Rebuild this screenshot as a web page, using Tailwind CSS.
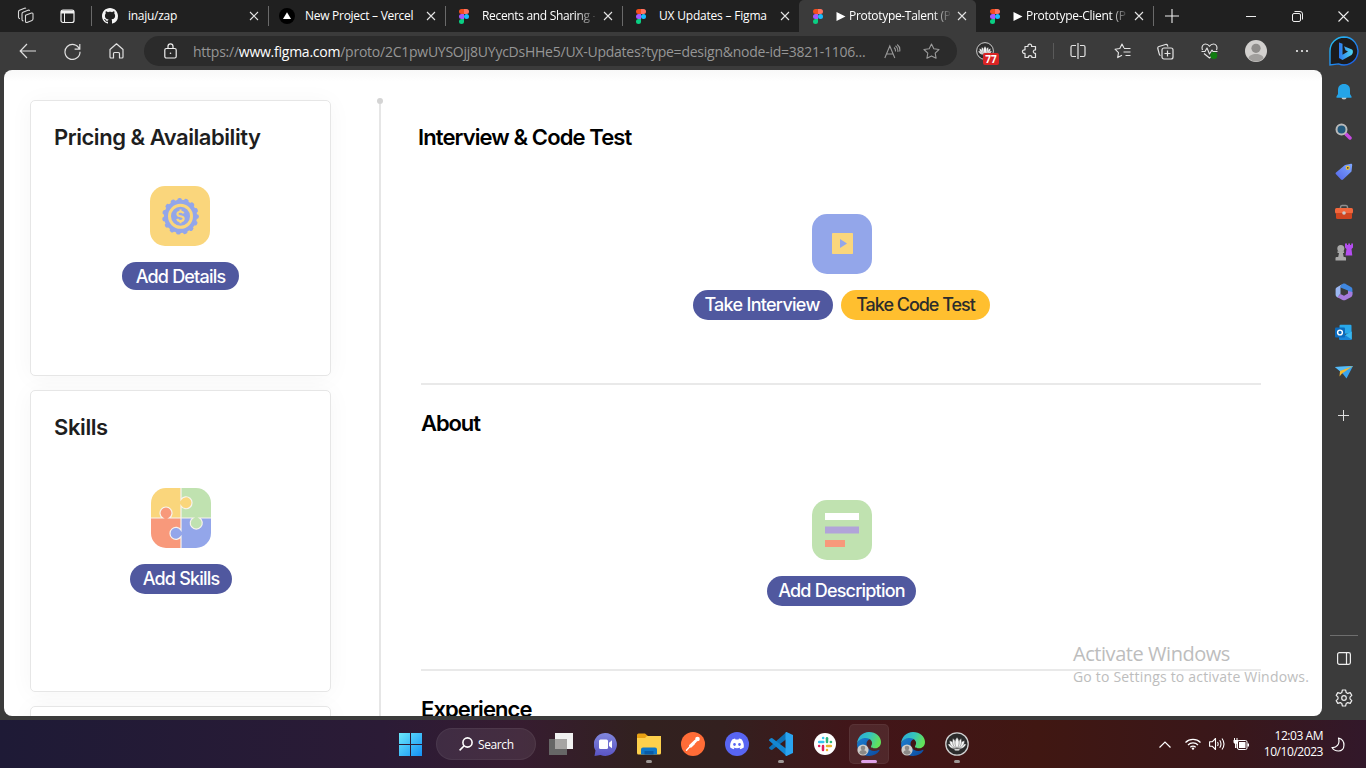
<!DOCTYPE html>
<html lang="en">
<head>
<meta charset="utf-8">
<title>Prototype-Talent</title>
<script src="https://cdn.jsdelivr.net/npm/@tailwindcss/browser@4"></script>
</head>
<body class="w-[1366px] h-[768px] overflow-hidden bg-[#3b3b3b] flex flex-col font-['Open_Sans','Noto_Sans',sans-serif] text-white">

<!-- Shared symbols -->
<svg class="absolute w-0 h-0">
  <symbol id="figma" viewBox="0 0 10 15">
    <path d="M2.5 0H5v5H2.5a2.5 2.5 0 0 1 0-5z" fill="#f24e1e"/><path d="M5 0h2.500a2.500 2.500 0 0 1 0 5H5z" fill="#ff7262"/>
    <path d="M2.500 5H5v5H2.500a2.500 2.500 0 0 1 0-5z" fill="#a259ff"/><circle cx="7.500" cy="7.500" r="2.500" fill="#1abcfe"/>
    <path d="M2.500 10H5v2.500A2.500 2.500 0 1 1 2.500 10z" fill="#0acf83"/>
  </symbol>
  <symbol id="close" viewBox="0 0 10 10"><path d="M1 1l8 8M9 1L1 9" stroke="#e4e4e4" stroke-width="1.100" fill="none"/></symbol>
  <linearGradient id="eg1" x1="0" y1="0" x2="1" y2="0.300"><stop offset="0" stop-color="#2aa6de"/><stop offset=".55" stop-color="#35c4bd"/><stop offset="1" stop-color="#62e05a"/></linearGradient>
  <linearGradient id="eg2" x1="0" y1="0" x2="1" y2="1"><stop offset="0" stop-color="#1b7fd0"/><stop offset="1" stop-color="#0c4aa0"/></linearGradient>
  <linearGradient id="bg1" x1="0" y1="0" x2="1" y2="1"><stop offset="0" stop-color="#27c6f5"/><stop offset="1" stop-color="#1a56e8"/></linearGradient>
  <linearGradient id="bg2" x1="0" y1="0" x2="1" y2="0"><stop offset="0" stop-color="#2b78f0"/><stop offset="1" stop-color="#4fd8f2"/></linearGradient>
  <symbol id="edge" viewBox="0 0 24 24">
    <path d="M0 12c2-6 9-8 13.500-5-4 1-5 5-3 8.500 2 3.500 7 4.500 11 2.500.8-.4 1.200.1.800.8C20.300 22 16.500 24 12 24 5 24 0 19 0 12z" fill="url(#eg2)"/>
    <path d="M0 11.500C.5 5 5.500 0 12 0c7 0 12 4.800 12 10 0 4-2.800 6.300-6 6.300-3.200 0-4.800-1-3.600-2.800C16.500 10.500 14 6 8.500 6 4.500 6 1.200 8.500 0 11.500z" fill="url(#eg1)"/>
    <circle cx="6" cy="18" r="5.600" fill="#cfcdca"/><circle cx="6" cy="16" r="2.300" fill="#8b8987"/><path d="M2.300 21c0-4 7.400-4 7.400 0a5.600 5.600 0 0 1-7.400 0z" fill="#8b8987"/>
  </symbol>
  <symbol id="lotus" viewBox="0 0 24 24">
    <circle cx="12" cy="12" r="11.200" fill="#2b2b2b" stroke="#d0d0d0" stroke-width="1.300"/>
    <g transform="translate(1 1) scale(.92)" fill="#f5f5f5" stroke="#444" stroke-width=".5"><path d="M2 12c4-.5 7.500 1 9.500 5-4 1-8-.8-9.500-5zM22 12c-4-.5-7.500 1-9.500 5 4 1 8-.8 9.500-5z"/><path d="M3.800 8.500c4 .5 7 4 7.700 8.500-4.500-.5-7.500-4-7.700-8.500zM20.200 8.500c-4 .5-7 4-7.700 8.500 4.500-.5 7.500-4 7.700-8.500z"/><path d="M7.500 6c3 2 4.500 7 4 11-4-2-5-7-4-11zM16.500 6c-3 2-4.500 7-4 11 4-2 5-7 4-11z"/><path d="M12 5c3 3 3 8 0 12-3-4-3-9 0-12z"/><path d="M8.500 17.300h7l-1.500 2h-4z"/></g>
  </symbol>
</svg>

<!-- Tab strip -->
<header class="h-8 shrink-0 bg-[#202020] flex items-center text-[12px] tracking-[-0.28px]">
  <div class="w-[91px] flex items-center pl-[17px] gap-[25px] shrink-0">
    <svg class="w-[18px] h-[18px]" viewBox="0 0 18 18" fill="none" stroke="#d8d8d8" stroke-width="1.100" stroke-linejoin="round"><path d="M8.500 8.200l6-2.200q1.500-.3 1.500 1.200v4.600q0 1.200-1 1.600l-5 2q-1.500.4-1.500-1.200z"/><path d="M6.500 14q-1.500-.2-1.500-1.500V6.800q0-1.200 1-1.600l5-2q1.300-.3 1.600.6"/><path d="M3 11.800q-1.500-.3-1.500-1.500V4.800q0-1.200 1-1.600l5-2q1-.3 1.400.3"/></svg>
    <svg class="w-[15px] h-[15px]" viewBox="0 0 15 15" fill="none" stroke="#f0f0f0"><rect x="1" y="1" width="13" height="12.500" rx="2" stroke-width="1.200"/><path d="M1 3h13" stroke-width="3"/><path d="M4.500 4v9.500" stroke-width="1"/></svg>
  </div>
  <div class="w-[177px] shrink-0 flex items-center">
    <i class="w-px h-5 bg-[#6a6a6a]"></i>
    <svg class="ml-[10px] size-4" viewBox="0 0 16 16" fill="#f6f6f6"><path d="M8 0C3.580 0 0 3.580 0 8c0 3.540 2.290 6.530 5.470 7.590.4.070.55-.17.55-.38 0-.19-.01-.82-.01-1.490-2.010.37-2.530-.49-2.690-.94-.09-.23-.48-.94-.82-1.130-.28-.15-.68-.52-.01-.53.63-.01 1.080.58 1.230.82.72 1.210 1.870.87 2.330.66.07-.52.28-.87.51-1.070-1.780-.2-3.640-.89-3.640-3.950 0-.87.31-1.590.82-2.150-.08-.2-.36-1.020.08-2.120 0 0 .67-.21 2.200.82.64-.18 1.320-.27 2-.27s1.360.09 2 .27c1.530-1.040 2.200-.82 2.200-.82.44 1.100.16 1.920.08 2.120.51.56.82 1.270.82 2.150 0 3.070-1.870 3.750-3.650 3.950.29.25.54.73.54 1.480 0 1.070-.01 1.930-.01 2.200 0 .21.15.46.55.38A8 8 0 0 0 16 8c0-4.420-3.580-8-8-8z"/></svg>
    <span class="ml-[10px] w-[110px] whitespace-nowrap overflow-hidden">inaju/zap</span>
    <svg class="ml-[11px] size-[10px]"><use href="#close"/></svg>
  </div>
  <div class="w-[177px] shrink-0 flex items-center">
    <i class="w-px h-5 bg-[#6a6a6a]"></i>
    <svg class="ml-[10px] size-4" viewBox="0 0 16 16"><circle cx="8" cy="8" r="8" fill="#000"/><path d="M8 4.300l4 6.700H4z" fill="#fff"/></svg>
    <span class="ml-[10px] w-[110px] whitespace-nowrap overflow-hidden">New Project – Vercel</span>
    <svg class="ml-[11px] size-[10px]"><use href="#close"/></svg>
  </div>
  <div class="w-[177px] shrink-0 flex items-center">
    <i class="w-px h-5 bg-[#6a6a6a]"></i>
    <svg class="ml-[13px] w-[10px] h-[15px]"><use href="#figma"/></svg>
    <span class="ml-[13px] w-[113px] whitespace-nowrap tracking-[-0.33px] [mask-image:linear-gradient(to_right,#000_94px,transparent_116px)]">Recents and Sharing –</span>
    <svg class="ml-[8px] size-[10px]"><use href="#close"/></svg>
  </div>
  <div class="w-[177px] shrink-0 flex items-center">
    <i class="w-px h-5 bg-[#6a6a6a]"></i>
    <svg class="ml-[13px] w-[10px] h-[15px]"><use href="#figma"/></svg>
    <span class="ml-[13px] w-[110px] whitespace-nowrap tracking-[-0.2px]">UX Updates – Figma</span>
    <svg class="ml-[11px] size-[10px]"><use href="#close"/></svg>
  </div>
  <div class="w-[177px] h-8 shrink-0 flex items-center bg-[#3b3b3b] rounded-t-[5px]">
    <svg class="ml-[14px] w-[10px] h-[15px]"><use href="#figma"/></svg>
    <svg class="ml-[13px] w-[10px] h-[9px]" viewBox="0 0 10 9"><path d="M0.500 0v9L9.500 4.500z" fill="#fff"/></svg>
    <span class="ml-[3px] w-[101px] whitespace-nowrap tracking-[-0.32px] [mask-image:linear-gradient(to_right,#000_84px,transparent_103px)]">Prototype-Talent (P</span>
    <svg class="ml-[7px] size-[10px]"><use href="#close"/></svg>
  </div>
  <div class="w-[177px] shrink-0 flex items-center">
    <svg class="ml-[14px] w-[10px] h-[15px]"><use href="#figma"/></svg>
    <svg class="ml-[13px] w-[10px] h-[9px]" viewBox="0 0 10 9"><path d="M0.500 0v9L9.500 4.500z" fill="#fff"/></svg>
    <span class="ml-[3px] w-[101px] whitespace-nowrap [mask-image:linear-gradient(to_right,#000_84px,transparent_103px)]">Prototype-Client (P</span>
    <svg class="ml-[7px] size-[10px]"><use href="#close"/></svg>
  </div>
  <i class="w-px h-5 bg-[#6a6a6a]"></i>
  <svg class="ml-[11px] size-[14px] shrink-0" viewBox="0 0 14 14" stroke="#eee" stroke-width="1.100"><path d="M7 0v14M0 7h14"/></svg>
  <svg class="ml-[67px] w-[10px] h-[10px] shrink-0" viewBox="0 0 10 10"><path d="M0 5.500h10" stroke="#eee"/></svg>
  <svg class="ml-[36px] w-[11px] h-[11px] shrink-0" viewBox="0 0 11 11" fill="none" stroke="#eee"><rect x=".5" y="2.500" width="8" height="8" rx="1.500"/><path d="M2.500.5H8A2.500 2.500 0 0 1 10.500 3v5.500"/></svg>
  <svg class="ml-[35px] w-[11px] h-[11px] shrink-0" viewBox="0 0 11 11"><path d="M.5.5l10 10M10.500.5l-10 10" stroke="#eee" stroke-width="1.100"/></svg>
</header>

<!-- Toolbar -->
<nav class="h-[38px] shrink-0 flex items-center">
  <div class="w-[144px] flex items-center shrink-0 pl-[6px]">
    <div class="w-11 flex justify-center"><svg class="w-[18px] h-[16px]" viewBox="0 0 18 16" fill="none" stroke="#e0e0e0" stroke-width="1.200"><path d="M17 8H1.500M8 1L1.200 8 8 15"/></svg></div>
    <div class="w-11 flex justify-center"><svg class="w-[17px] h-[17px]" viewBox="0 0 17 17" fill="none" stroke="#e0e0e0" stroke-width="1.200"><path d="M15.500 6.200A7.500 7.500 0 1 0 16 8.800M15.800 1v5.200h-5.200"/></svg></div>
    <div class="w-11 flex justify-center"><svg class="w-[15px] h-[16px]" viewBox="0 0 15 16" fill="none" stroke="#e0e0e0" stroke-width="1.200" stroke-linejoin="round"><path d="M1 6.500L7.500.8 14 6.500V14a1 1 0 0 1-1 1h-2.500v-4.500a1 1 0 0 0-1-1h-4a1 1 0 0 0-1 1V15H2a1 1 0 0 1-1-1z"/></svg></div>
  </div>
  <div class="w-[813px] h-[30px] shrink-0 rounded-full bg-[#2b2b2b] flex items-center">
    <svg class="ml-[20px] w-[13px] h-[16px]" viewBox="0 0 13 16" fill="none" stroke="#f0f0f0" stroke-width="1.200"><rect x=".8" y="5.500" width="11.400" height="9.500" rx="1.500"/><path d="M4 5.500V3.300a2.500 2.500 0 0 1 5 0v2.200"/><circle cx="6.500" cy="10.200" r=".8" fill="#f0f0f0" stroke="none"/></svg>
    <span class="ml-4 w-[680px] whitespace-nowrap text-[14px] tracking-[-0.245px] text-[#969696]">https://<span class="text-white">www.figma.com</span>/proto/2C1pwUYSOjj8UYycDsHHe5/UX-Updates?type=design&amp;node-id=3821-1106...</span>
    <svg class="ml-[11px] w-[17px] h-[15px]" viewBox="0 0 17 15" fill="none" stroke="#9a9a9a" stroke-width="1.100"><path d="M.8 14L5.800 2l5 12M2.500 10h6.600M10 3.500q1.800 1.500 1.400 4M11.500 1.800q3 2.200 2.300 6M13.200.5q3.300 2.500 2.500 7"/></svg>
    <svg class="ml-[22px] w-[17px] h-[16px]" viewBox="0 0 17 16" fill="none" stroke="#9a9a9a" stroke-width="1.100" stroke-linejoin="round"><path d="M8.500 1l2.300 4.700 5.200.8-3.800 3.700.9 5.100-4.600-2.400-4.600 2.400.9-5.100L1 6.500l5.200-.8z"/></svg>
  </div>
  <div class="w-[50px] shrink-0 flex justify-center relative pl-[6px]">
    <svg class="size-[18px]"><use href="#lotus"/></svg>
    <span class="absolute left-[26px] top-[11px] w-4 h-3 rounded-[2px] bg-[#d92424] text-[10px] leading-[12px] font-bold text-center">77</span>
  </div>
  <div class="w-[45px] shrink-0 flex justify-center"><svg class="size-[17px]" viewBox="0 0 17 17" fill="none" stroke="#e4e4e4" stroke-width="1.200" stroke-linejoin="round"><path d="M4 3.500h3c-.6-3.200 4.200-3.200 3.600 0h3.900v3.400c-2.900-.4-2.900 3.800 0 3.400v4.200h-3.600c.3-2.600-3.900-2.600-3.600 0H4v-4.200C.6 11 .6 6.200 4 6.900z"/></svg></div>
  <i class="w-px h-4 bg-[#5a5a5a] shrink-0 ml-[1px]"></i>
  <div class="w-[47px] shrink-0 flex justify-center"><svg class="w-[16px] h-[16px]" viewBox="0 0 16 16" fill="none" stroke="#e4e4e4" stroke-width="1.200"><path d="M6 2.500H2.500A1.500 1.500 0 0 0 1 4v8a1.500 1.500 0 0 0 1.500 1.500H6M10 2.500h3.500A1.500 1.500 0 0 1 15 4v8a1.500 1.500 0 0 1-1.500 1.500H10M8 0v16"/></svg></div>
  <div class="w-[42px] shrink-0 flex justify-center"><svg class="w-[17px] h-[16px]" viewBox="0 0 17 16" fill="none" stroke="#e4e4e4" stroke-width="1.100" stroke-linejoin="round"><path d="M10 5L8 1 5.800 5.500 1 6.200l3.500 3.500L3.700 14.600 8 12.300M10 5.500h6.500M9.500 9h7M11.500 12.500h5"/></svg></div>
  <div class="w-[44px] shrink-0 flex justify-center"><svg class="w-[17px] h-[17px]" viewBox="0 0 17 17" fill="none" stroke="#e4e4e4" stroke-width="1.200" stroke-linejoin="round"><rect x="5" y="5" width="11" height="11" rx="2"/><path d="M10.500 7.500v6M7.500 10.500h6M3.500 12.500c-.8-.2-1-.7-1.200-1.400L.8 5.500c-.2-1 .2-1.700 1.200-2L8.500 1.500c1-.3 1.900.2 2.100 1.200l.3 1"/></svg></div>
  <div class="w-[45px] shrink-0 flex justify-center"><svg class="w-[17px] h-[16px]" viewBox="0 0 17 16" fill="none" stroke="#e4e4e4" stroke-width="1.100" stroke-linejoin="round"><path d="M1.500 7C0 3 2.500 1 4.500 1c2 0 3.200 1 4 2.300C9.300 2 10.500 1 12.500 1c2 0 4.500 2 3 6M.5 8.500H4l2-3.500 2.500 6L11 7l1 1.500h4.500M3 10.500L8.500 15l2-1.500"/><circle cx="12.800" cy="12.500" r="3.500" fill="#107c10" stroke="none"/></svg></div>
  <div class="w-[48px] shrink-0 flex justify-center"><svg class="size-[22px]" viewBox="0 0 22 22"><circle cx="11" cy="11" r="11" fill="#d2d0ce"/><circle cx="11" cy="8.300" r="4.600" fill="#8f8d8b"/><path d="M3.500 18.500c0-6 15-6 15 0a11 11 0 0 1-15 0z" fill="#a19f9d"/></svg></div>
  <div class="w-[44px] shrink-0 flex justify-center"><svg class="w-[14px] h-[4px]" viewBox="0 0 14 4" fill="#eee"><circle cx="2" cy="2" r="1.100"/><circle cx="7" cy="2" r="1.100"/><circle cx="12" cy="2" r="1.100"/></svg></div>
  <div class="w-[40px] shrink-0 flex justify-center"><svg class="size-[30px]" viewBox="0 0 30 30"><path d="M15 1a14 14 0 1 1-5.500 26.900L1 29V15A14 14 0 0 1 15 1z" fill="#1b1b1d" stroke="url(#bg1)" stroke-width="1.400"/><path d="M10 6.500l3.500 1.200v11L19 15.500l-2.500-1.200-1.500-4 8 3.300c1.500 1 1 4.300-.5 5.300L13.500 24 10 22z" fill="url(#bg2)"/></svg></div>
</nav>

<!-- Page and sidebar -->
<div class="h-[650px] shrink-0 flex pl-1">
  <main class="relative w-[1318px] h-[646px] bg-white rounded-lg overflow-hidden flex shrink-0 pl-[26px] pt-[30px] font-['Inter',sans-serif] bg-[linear-gradient(to_bottom,#f8f8f8,#ffffff_12px)]">
    <div class="w-[301px] shrink-0 flex flex-col gap-[14px] text-[#1e1e1e]">
      <section class="h-[276px] shrink-0 bg-white border border-[#e6e6e6] rounded-[5px] shadow-[0_2px_24px_rgba(0,0,0,0.04)] flex flex-col items-center">
        <h2 class="self-start ml-[23px] mt-[21px] h-[30px] leading-[30px] text-[22px] font-semibold tracking-[-0.46px] whitespace-nowrap">Pricing &amp; Availability</h2>
        <svg class="mt-[34px] mr-px size-[60px] shrink-0" viewBox="0 0 60 60"><rect width="60" height="60" rx="15" fill="#fad67c"/><circle cx="30.500" cy="30.300" r="16.600" fill="#93a6ea"/><circle cx="30.500" cy="30.300" r="16.300" fill="none" stroke="#93a6ea" stroke-width="4.200" stroke-linecap="round" stroke-dasharray="0.500 6.328"/><circle cx="30.500" cy="30.300" r="11" fill="none" stroke="#fad67c" stroke-width="3"/><path d="M33.600 27.400c-.5-1.300-1.700-1.700-3.100-1.700-3.700 0-4.100 3.600-.9 4.400l1.900.4c3.200.7 2.800 4.500-1 4.500-1.700 0-2.900-.7-3.300-2.100M30.500 23.500v2M30.500 35v2.200" fill="none" stroke="#fad67c" stroke-width="2.100"/></svg>
        <button class="mt-4 w-[117px] h-7 rounded-full bg-[#50589f] text-white text-[18px] leading-[28px] pt-px font-medium tracking-[-0.8px] whitespace-nowrap">Add Details</button>
      </section>
      <section class="h-[302px] shrink-0 bg-white border border-[#e6e6e6] rounded-[5px] shadow-[0_2px_24px_rgba(0,0,0,0.04)] flex flex-col items-center">
        <h2 class="self-start ml-[23px] mt-[21px] h-[30px] leading-[30px] text-[22px] font-semibold tracking-[-0.4px]">Skills</h2>
        <svg class="mt-[46px] ml-px size-[60px] shrink-0" viewBox="0 0 60 60"><defs><clipPath id="pz"><rect width="60" height="60" rx="15"/></clipPath></defs><g clip-path="url(#pz)"><path d="M0 0h30v30H0z" fill="#fad67c"/><path d="M30 0h30v30H30z" fill="#c0e2b0"/><path d="M0 30h30v30H0z" fill="#f8997b"/><path d="M30 30h30v30H30z" fill="#93a6ea"/>
          <g stroke="#f7f3ee" stroke-width="1.200"><path d="M30 0v11.500a6 6 0 1 1 0 6.500V30" fill="#fad67c"/><path d="M60 30H48.500a6 6 0 1 1-6.500 0H30" fill="#c0e2b0"/><path d="M30 60V48.700a6 6 0 1 1 0-6.600V30" fill="#93a6ea"/><path d="M0 30h11.700a6 6 0 1 1 6.600 0H30" fill="#f8997b"/></g></g></svg>
        <button class="mt-4 ml-px w-[102px] h-[30px] rounded-full bg-[#50589f] text-white text-[18px] leading-[30px] font-medium tracking-[-0.8px] whitespace-nowrap">Add Skills</button>
      </section>
      <section class="h-[302px] shrink-0 bg-white border border-[#e6e6e6] rounded-[5px] shadow-[0_2px_24px_rgba(0,0,0,0.04)]"></section>
    </div>
    <div class="ml-[46px] -mt-[2px] w-[6px] h-[700px] shrink-0 flex flex-col items-center"><i class="size-[6px] rounded-full bg-[#d4d4d4]"></i><i class="w-[2px] grow bg-[#e6e6e6]"></i></div>
    <div class="ml-[38px] w-[840px] shrink-0 text-black">
      <section class="h-[285px] border-b-2 border-[#e9e9e9] flex flex-col items-center">
        <h2 class="self-start -ml-[3px] mt-[22px] h-[30px] leading-[30px] text-[22px] font-semibold tracking-[-0.9px] whitespace-nowrap">Interview &amp; Code Test</h2>
        <svg class="mt-[62px] ml-[2px] size-[60px] shrink-0" viewBox="0 0 60 60"><rect width="60" height="60" rx="15" fill="#93a6ea"/><rect x="20" y="19" width="21" height="21" rx=".8" fill="#fad67c"/><path d="M28 25v9l7-4.500z" fill="#93a6ea"/></svg>
        <div class="mt-4 ml-[1px] flex gap-2 text-[18px] leading-[30px] font-medium">
          <button class="w-[140px] h-[30px] pr-[2px] rounded-full bg-[#50589f] text-white tracking-[-0.72px] whitespace-nowrap">Take Interview</button>
          <button class="w-[149px] h-[30px] rounded-full bg-[#ffbf2f] text-[#2c2c2c] tracking-[-1.02px] whitespace-nowrap">Take Code Test</button>
        </div>
      </section>
      <section class="h-[286px] border-b-2 border-[#e9e9e9] flex flex-col items-center">
        <h2 class="self-start mt-[23px] h-[30px] leading-[30px] text-[22px] font-semibold tracking-[-1.1px]">About</h2>
        <svg class="mt-[62px] ml-[2px] size-[60px] shrink-0" viewBox="0 0 60 60"><rect width="60" height="60" rx="15" fill="#c0e2b0"/><path d="M13 13h34v7H13z" fill="#fff"/><path d="M13 26.500h34v7H13z" fill="#b1a4d9"/><path d="M13 40h20v7H13z" fill="#f8997b"/></svg>
        <button class="mt-4 ml-px w-[149px] h-[30px] rounded-full bg-[#50589f] text-white text-[18px] leading-[30px] font-medium tracking-[-0.8px] whitespace-nowrap">Add Description</button>
      </section>
      <section class="flex flex-col">
        <h2 class="mt-[23px] h-[30px] leading-[30px] text-[22px] font-semibold tracking-[-0.9px]">Experience</h2>
      </section>
    </div>
    <!-- Activation watermark floats over the page -->
    <div class="absolute left-[1069px] top-[571px] text-[#bdbdbd] font-['Open_Sans',sans-serif] whitespace-nowrap">
      <div class="text-[20px] leading-[26px] tracking-[-0.45px]">Activate Windows</div>
      <div class="text-[14px] leading-[20px] tracking-[0.19px]">Go to Settings to activate Windows.</div>
    </div>
  </main>

  <aside class="w-[43px] shrink-0 flex flex-col items-center">
    <div class="h-10 mt-[2px] flex items-center"><svg class="w-[16px] h-[18px]" viewBox="0 0 16 18"><path d="M5.500 14h5a2.500 2.500 0 0 1-5 0z" fill="#c8c8c8"/><path d="M8 1c4 0 6 2.500 6 6v4l1.500 2.500c.3.800 0 1.300-.8 1.300H1.300c-.8 0-1.100-.5-.8-1.300L2 11V7c0-3.500 2-6 6-6z" fill="#25a4e8"/></svg></div>
    <div class="h-10 flex items-center pb-[2px]"><svg class="w-[17px] h-[17px]" viewBox="0 0 17 17"><path d="M11 11l4 4" stroke="#c64ae0" stroke-width="3.500" stroke-linecap="round"/><circle cx="6.500" cy="6.500" r="5" fill="#235a7d" stroke="#b9b9b9" stroke-width="2"/></svg></div>
    <div class="h-10 flex items-center"><svg class="w-[18px] h-[18px]" viewBox="0 0 18 18"><defs><linearGradient id="tg" x1="1" y1="0" x2="0" y2="1"><stop stop-color="#7fa8ff"/><stop offset="1" stop-color="#5365e8"/></linearGradient></defs><path d="M10 2l6-1.200c.8 0 1.200.4 1.200 1.200L16.500 8.500 8 16.500c-.6.6-1.300.6-2 0L1 11.200c-.6-.6-.6-1.200 0-1.800z" fill="url(#tg)"/><circle cx="12.800" cy="4.800" r="1.500" fill="#3b3b3b" stroke="#f4c430" stroke-width="1.200"/></svg></div>
    <div class="h-10 flex items-center"><svg class="w-[18px] h-[16px]" viewBox="0 0 18 16"><path d="M5.500 4.500V3.300C5.500 2 6 1.500 7 1.500h4c1 0 1.500.5 1.500 1.800v1.200" fill="none" stroke="#8f8f8f" stroke-width="1.500"/><rect y="4" width="18" height="5.500" rx="1.500" fill="#f2673c"/><path d="M1 9h16v4.500A1.500 1.500 0 0 1 15.500 15h-13A1.500 1.500 0 0 1 1 13.500z" fill="#cf4520"/><circle cx="9" cy="9" r="1.800" fill="#c9c9c9"/></svg></div>
    <div class="h-10 flex items-center"><svg class="w-[18px] h-[18px]" viewBox="0 0 18 18"><path d="M10 .5h2V2h1.200V.5h1.800V2h1.200V.5H18v4L16.500 6l.8 6.500H10.500l1-6.500L10 4.500z" fill="#b44df0"/><g fill="#a9a9a9"><circle cx="5.800" cy="5.500" r="3.500"/><path d="M2.500 8.300h6.600V10H7.900l.8 4H10a1 1 0 0 1 1 1v2.500H.5V15a1 1 0 0 1 1-1h1.700l.8-4H2.500z"/></g></svg></div>
    <div class="h-10 flex items-center"><svg class="w-[18px] h-[18px]" viewBox="0 0 18 18"><path d="M8 .8L2 4.200C1 4.800.6 5.500.6 6.500v5.200c0 1 .4 1.700 1.200 2.200l2 1.100C3 13 4 12 5.500 11V5.500C5.500 3 6.500 1.500 8 .8z" fill="#9bb7f2"/><path d="M7.500 1c2-.8 3-.2 4 .4L16 4c1 .6 1.400 1.300 1.400 2.500v5.200L13 10V7.500L5.500 4.500V4C5.500 2.500 6.500 1.500 7.500 1z" fill="#3f87e0"/><path d="M17.400 9v2.700c0 1-.4 1.700-1.200 2.200L11 16.800c-1.400.7-2.600.7-4 0L2.500 14.200 5.500 11l3.500 1.800L13 10.500V8z" fill="#a77bdc"/></svg></div>
    <div class="h-10 flex items-center"><svg class="w-[17px] h-[17px]" viewBox="0 0 17 17"><rect x="4.500" y=".8" width="12" height="9" rx="1" fill="#28a8ea"/><path d="M4 7.500l6 3.500 6.800-3.500v7.500a1 1 0 0 1-1 1H5a1 1 0 0 1-1-1z" fill="#1684d8"/><path d="M10 11l6.800 4.500V7.500z" fill="#50d9ff" opacity=".6"/><rect y="3.500" width="10" height="10" rx="1" fill="#0b6bbd"/><circle cx="5" cy="8.500" r="2.400" fill="none" stroke="#fff" stroke-width="1.400"/></svg></div>
    <div class="h-10 flex items-center"><svg class="w-[18px] h-[14px]" viewBox="0 0 18 14"><path d="M0 2l18-1-6.500 12.500L8 9z" fill="#38a3ee"/><path d="M0 2l18-1L5 6z" fill="#57bcf7"/><path d="M18 1L5 6l-.5 5.500L7 8.500z" fill="#f5b92e"/></svg></div>
    <svg class="mt-[18px] size-[11px] shrink-0" viewBox="0 0 11 11"><path d="M5.500 0v11M0 5.500h11" stroke="#ddd"/></svg>
    <i class="mt-[214px] w-7 h-px bg-[#6e6e6e] shrink-0"></i>
    <svg class="mt-[16px] w-[14px] h-[13px] shrink-0" viewBox="0 0 14 13" fill="none" stroke="#eee" stroke-width="1.200"><rect x=".6" y=".6" width="12.800" height="11.800" rx="1.800"/><path d="M9.500.6v11.800"/></svg>
    <svg class="mt-[24px] size-[18px] shrink-0" viewBox="0 0 18 18" fill="none" stroke="#eee" stroke-width="1.200" stroke-linejoin="round"><circle cx="9" cy="9" r="2.300"/><path d="M7.400 1h3.200l.6 2.500 1.500.9 2.500-.8 1.600 2.800L15 8.200v1.600l1.800 1.800-1.600 2.800-2.500-.8-1.500.9-.6 2.500H7.400l-.6-2.500-1.500-.9-2.500.8-1.600-2.800L3 9.800V8.200L1.200 6.400l1.600-2.800 2.500.8 1.500-.9z"/></svg>
  </aside>
</div>

<!-- Taskbar -->
<footer class="h-12 shrink-0 flex items-center bg-[linear-gradient(to_right,#1e1a36_0%,#2b1b36_28%,#361c30_38%,#32211f_47%,#33201f_53%,#421519_63%,#401712_76%,#39171a_90%,#32182a_100%)] pl-[388px]">
  <div class="w-11 shrink-0 flex justify-center"><svg class="size-[23px]" viewBox="0 0 23 23"><defs><linearGradient id="wg" gradientUnits="userSpaceOnUse" x1="0" y1="0" x2="23" y2="23"><stop stop-color="#6be9fb"/><stop offset="1" stop-color="#1390f5"/></linearGradient></defs><path d="M0 0h11v11H0zM12 0h11v11H12zM0 12h11v11H0zM12 12h11v11H12z" fill="url(#wg)"/></svg></div>
  <div class="ml-1 w-[100px] h-8 shrink-0 rounded-full bg-white/8 border border-white/5 flex items-center pl-[22px]">
    <svg class="w-[14px] h-[14px]" viewBox="0 0 14 14" fill="none" stroke="#fff" stroke-width="1.600"><circle cx="8.500" cy="5.500" r="4.600"/><path d="M5.200 8.800L.6 13.400"/></svg>
    <span class="ml-[5px] mt-[2px] text-[12px] tracking-[-0.4px]">Search</span>
  </div>
  <div class="ml-[3px] w-11 shrink-0 flex justify-center"><svg class="w-6 h-[22px]" viewBox="0 0 24 22"><rect x="6" width="18" height="16" fill="#f1f1f1"/><rect y="6" width="18" height="16" fill="#666"/><rect x="6" y="6" width="12" height="10" fill="#a6a4a3"/></svg></div>
  <div class="w-11 shrink-0 flex justify-center"><svg class="size-[23px]" viewBox="0 0 23 23"><defs><linearGradient id="cg" x1="0" y1="0" x2="0" y2="1"><stop stop-color="#8187dc"/><stop offset="1" stop-color="#5a54c4"/></linearGradient></defs><path d="M11.500 0a11.500 11.500 0 1 1-5 21.900L.5 23l1-5.500A11.500 11.500 0 0 1 11.500 0z" fill="url(#cg)"/><rect x="5" y="6.500" width="9" height="9.500" rx="1.500" fill="#fff"/><path d="M15 9.800L18 7.300v8L15 13z" fill="#fff"/></svg></div>
  <div class="w-11 h-12 shrink-0 flex flex-col items-center"><svg class="mt-[13px] w-6 h-[22px]" viewBox="0 0 24 22"><path d="M0 2a1.500 1.500 0 0 1 1.500-1.500H8L11 3v5H0z" fill="#e8a113"/><path d="M0 5h8l2-2h14v17a1.500 1.500 0 0 1-1.500 1.500h-21A1.500 1.500 0 0 1 0 20z" fill="#fdd04c"/><path d="M4 21.500v-5A2 2 0 0 1 6 14.500h12a2 2 0 0 1 2 2v5z" fill="#1078c8"/><path d="M7.500 18h9v3.500h-9z" fill="#0a5ba6"/></svg><i class="mt-[5px] w-[6px] h-[3px] rounded-full bg-[#9d9795]"></i></div>
  <div class="w-11 shrink-0 flex justify-center"><svg class="size-6" viewBox="0 0 24 24"><circle cx="12" cy="12" r="12" fill="#ff6c37"/><g fill="none" stroke="#fff" stroke-linecap="round"><path d="M14.500 9L9.500 13.800" stroke-width="3"/><path d="M9 14.500L5.500 18.300" stroke-width="1.400"/><path d="M13 12l-3 2.800" stroke-width="1.500"/></g><circle cx="16.500" cy="7" r="2.300" fill="#fff"/></svg></div>
  <div class="w-11 shrink-0 flex justify-center"><svg class="size-6" viewBox="0 0 24 24"><circle cx="12" cy="12" r="12" fill="#5865f2"/><path d="M16.800 7.500A11 11 0 0 0 14 6.600l-.5.900a10 10 0 0 0-3 0l-.5-.9c-1 .2-1.900.5-2.800.9-1.800 2.700-2.300 5.400-2 8 1.200.9 2.300 1.400 3.400 1.700l.8-1.300c-.4-.1-.8-.3-1.200-.6 2.400 1.200 5.200 1.200 7.600 0-.4.300-.8.500-1.200.6l.8 1.300c1.100-.3 2.200-.8 3.400-1.700.3-3-.5-5.700-2-8z" fill="#fff"/><ellipse cx="9.500" cy="12.500" rx="1.300" ry="1.400" fill="#5865f2"/><ellipse cx="14.500" cy="12.500" rx="1.300" ry="1.400" fill="#5865f2"/></svg></div>
  <div class="w-11 h-12 shrink-0 flex flex-col items-center"><svg class="mt-3 size-6" viewBox="0 0 24 24"><path d="M17.500 0v7L3 18l-1.200-.2L0 16.300v-.8z" fill="#0e72b8"/><path d="M17.500 24v-7L3 6l-1.200.2L0 7.700v.8z" fill="#1487d2"/><path d="M17.500 0L24 3v18l-6.500 3c-.6 0-1-.5-1-1V1c0-.5.400-1 1-1z" fill="#2aa4f0"/></svg><i class="mt-1 w-[6px] h-[3px] rounded-full bg-[#9d9795]"></i></div>
  <div class="w-11 shrink-0 flex justify-center"><svg class="size-[22px]" viewBox="0 0 22 22"><circle cx="11" cy="11" r="11" fill="#fff"/><g stroke-width="2.500" stroke-linecap="round"><path d="M9.300 8.900H5.200" stroke="#36c5f0"/><path d="M9.200 4.900h-.1" stroke="#36c5f0"/><path d="M13 5.200v3.900" stroke="#2eb67d"/><path d="M17 9h-.2" stroke="#2eb67d"/><path d="M9 13v3.900" stroke="#e01e5a"/><path d="M5.200 13h-.1" stroke="#e01e5a"/><path d="M13 13h3.900" stroke="#ecb22e"/><path d="M13 17v-.1" stroke="#ecb22e"/></g></svg></div>
  <div class="w-11 h-12 shrink-0 flex justify-center items-center"><div class="w-10 h-10 rounded-[5px] bg-white/8 border border-white/5 flex flex-col items-center"><svg class="mt-[7px] size-6 shrink-0"><use href="#edge"/></svg><i class="mt-1 w-4 h-[3px] rounded-full bg-[#e0a2e8]"></i></div></div>
  <div class="w-11 shrink-0 flex justify-center"><svg class="size-6"><use href="#edge"/></svg></div>
  <div class="w-11 h-12 shrink-0 flex flex-col items-center"><svg class="mt-3 size-6"><use href="#lotus"/></svg><i class="mt-1 w-[6px] h-[3px] rounded-full bg-[#9d9795]"></i></div>
  <svg class="ml-[180px] w-3 h-[7px] shrink-0" viewBox="0 0 12 7" fill="none" stroke="#fff" stroke-width="1.200"><path d="M.5 6.500L6 1l5.500 5.500"/></svg>
  <svg class="ml-[14px] w-4 h-[12px] shrink-0" viewBox="0 0 16 12" fill="none" stroke="#fff" stroke-width="1.200"><path d="M.5 4.500a10.500 10.500 0 0 1 15 0M3 7a7 7 0 0 1 10 0M5.300 9.300a4 4 0 0 1 5.400 0"/><circle cx="8" cy="10.600" r="1.200" fill="#fff" stroke="none"/></svg>
  <svg class="ml-2 w-4 h-[14px] shrink-0" viewBox="0 0 16 14" fill="none" stroke="#fff" stroke-width="1.100" stroke-linejoin="round"><path d="M.6 4.800h2.600L6.500 1.500v11L3.200 9.200H.6zM8.500 5q1.300 2 0 4M10.700 3.200q2.600 3.800 0 7.600M13 1.500q4 5.500 0 11"/></svg>
  <svg class="ml-2 w-4 h-[13px] shrink-0" viewBox="0 0 16 13"><rect x="4.500" y="2.500" width="9.500" height="9" rx="1.500" fill="none" stroke="#fff"/><rect x="6" y="4" width="6.500" height="6" fill="#fff"/><path d="M14.500 5.500H16v3h-1.500zM1 0h1v2h1.500V0h1v2H5v2.500L3.500 6v4H2V6L.5 4.500V2H1z" fill="#fff"/></svg>
  <div class="ml-[4px] w-[70px] shrink-0 text-right text-[12px] leading-4 tracking-[-0.45px] whitespace-nowrap">12:03 AM<br>10/10/2023</div>
  <svg class="ml-[8px] w-[14px] h-[15px] shrink-0" viewBox="0 0 14 15" fill="none" stroke="#fff" stroke-width="1.200" stroke-linejoin="round"><path d="M7.500 1c7.500 2 7 13 0 13-3 0-5-1-6.500-3.500 4 .5 8.500-3 6.500-9.500z"/></svg>
</footer>
</body>
</html>
